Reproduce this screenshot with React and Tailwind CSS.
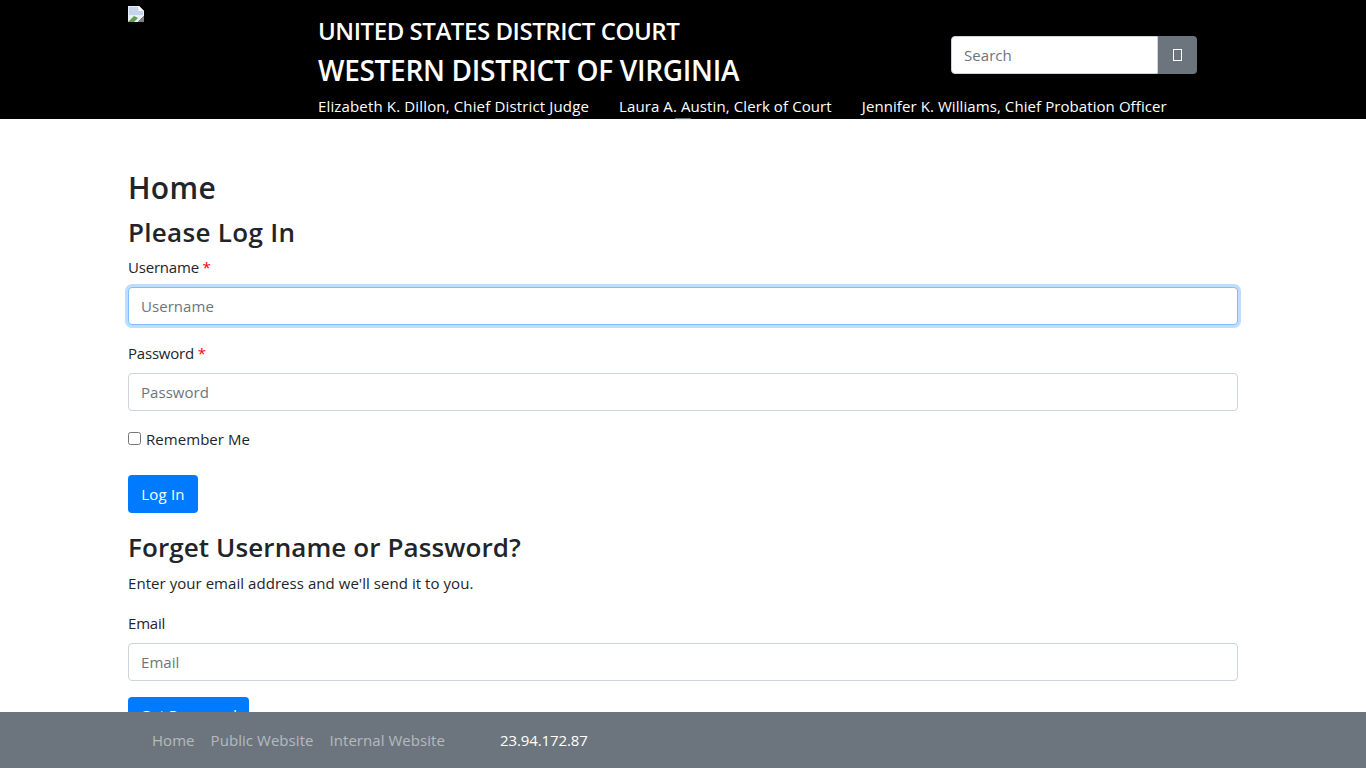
import React from "react";

const Field = ({ label, required, placeholder, focused }) => (
  <div className="mb-4">
    <label className="block mb-2 leading-6 tracking-[-0.2px]">
      {label} {required && <span className="text-[#ff0000]">*</span>}
    </label>
    <input
      placeholder={placeholder}
      className={
        "block w-full h-[38px] px-3 rounded border bg-white placeholder:text-[#6c757d] outline-none " +
        (focused
          ? "border-[#80bdff] shadow-[0_0_0_3px_rgba(0,123,255,0.25)]"
          : "border-[#ced4da]")
      }
    />
  </div>
);

const BrokenImage = () => (
  <svg width="16" height="16" viewBox="0 0 16 16" className="block">
    <path d="M0 0h11l5 5v5L10 16H0z" fill="#e8eef6" />
    <path d="M1 1h9v4h5v4H1z" fill="#c3d4ec" />
    <path d="M0 16l6-6 4 2-4 4z" fill="#5fa04e" />
    <path d="M11 0l5 5h-5z" fill="#ffffff" />
    <path d="M16 10v6h-6z" fill="#7f7f7f" />
  </svg>
);

export default function App() {
  return (
    <div className="relative flex flex-col h-screen overflow-hidden bg-white text-[15px] tracking-[0.05px] text-[#212529] font-['Open_Sans',sans-serif]">
      {/* Header */}
      <header className="h-[119px] shrink-0 bg-black text-white">
        <div className="w-[1110px] mx-auto flex">
          <div className="w-[190px] pt-[6px] shrink-0">
            <BrokenImage />
          </div>
          <div className="flex-1">
            <div className="flex">
              <div className="w-[633px] shrink-0">
                <div className="pt-[13px] text-2xl leading-9 font-semibold tracking-[-0.45px]">
                  UNITED STATES DISTRICT COURT
                </div>
                <div className="text-[28px] leading-[42px] font-semibold tracking-[-0.3px]">
                  WESTERN DISTRICT OF VIRGINIA
                </div>
              </div>
              <div className="flex w-[246px] h-[38px] mt-9">
                <input
                  placeholder="Search"
                  className="w-[207px] h-full px-3 rounded-l border border-[#ced4da] bg-white text-[#495057] placeholder:text-[#6c757d] outline-none"
                />
                <button className="flex-1 flex items-center justify-center rounded-r bg-[#6c757d]">
                  <span className="block w-[9px] h-3 border border-white" />
                </button>
              </div>
            </div>
            <div className="flex gap-[30px] mt-[3px] leading-6 tracking-[0.1px] whitespace-nowrap">
              <span className="tracking-[0.15px]">Elizabeth K. Dillon, Chief District Judge</span>
              <span>Laura A. Austin, Clerk of Court</span>
              <span className="tracking-[0.08px]">Jennifer K. Williams, Chief Probation Officer</span>
            </div>
          </div>
        </div>
      </header>

      {/* sliver poking out under the header */}
      <div className="absolute top-[118px] left-[675px] w-[16px] h-[2px] border-t border-[#5f6f80] bg-[#eaf3fb]" />

      {/* Content */}
      <main className="flex-1 min-h-0 overflow-hidden">
        <div className="w-[1110px] mx-auto pt-[50px]">
          <h2 className="text-[30px] leading-[38px] font-semibold mb-2 tracking-[0.3px]">Home</h2>
          <h3 className="text-[26px] leading-[34px] font-semibold mb-[6px] tracking-[0.3px]">Please Log In</h3>
          <Field label="Username" required placeholder="Username" focused />
          <Field label="Password" required placeholder="Password" />
          <div className="flex items-center mb-4 h-6">
            <input type="checkbox" className="w-[13px] h-[13px] mr-[5px] -mt-[1px]" />
            <span>Remember Me</span>
          </div>
          <button className="block mt-6 h-[38px] w-[70px] rounded bg-[#007bff] text-white tracking-[0.2px]">Log In</button>
          <h3 className="mt-[17px] text-[26px] leading-[34px] font-semibold mb-[7px] tracking-[0.1px]">Forget Username or Password?</h3>
          <p className="leading-6 mb-4">Enter your email address and we'll send it to you.</p>
          <Field label="Email" placeholder="Email" />
          <button className="block h-[38px] w-[121px] pb-[2px] rounded bg-[#007bff] text-white">Get Password</button>
        </div>
      </main>

      {/* Footer */}
      <footer className="h-14 shrink-0 bg-[#6c757d]">
        <div className="w-[1110px] mx-auto flex items-center h-full">
          <nav className="flex gap-4 pl-6 text-white/50">
            <a>Home</a>
            <a>Public Website</a>
            <a>Internal Website</a>
          </nav>
          <span className="ml-[55px] tracking-[-0.1px] text-white">23.94.172.87</span>
        </div>
      </footer>
    </div>
  );
}
